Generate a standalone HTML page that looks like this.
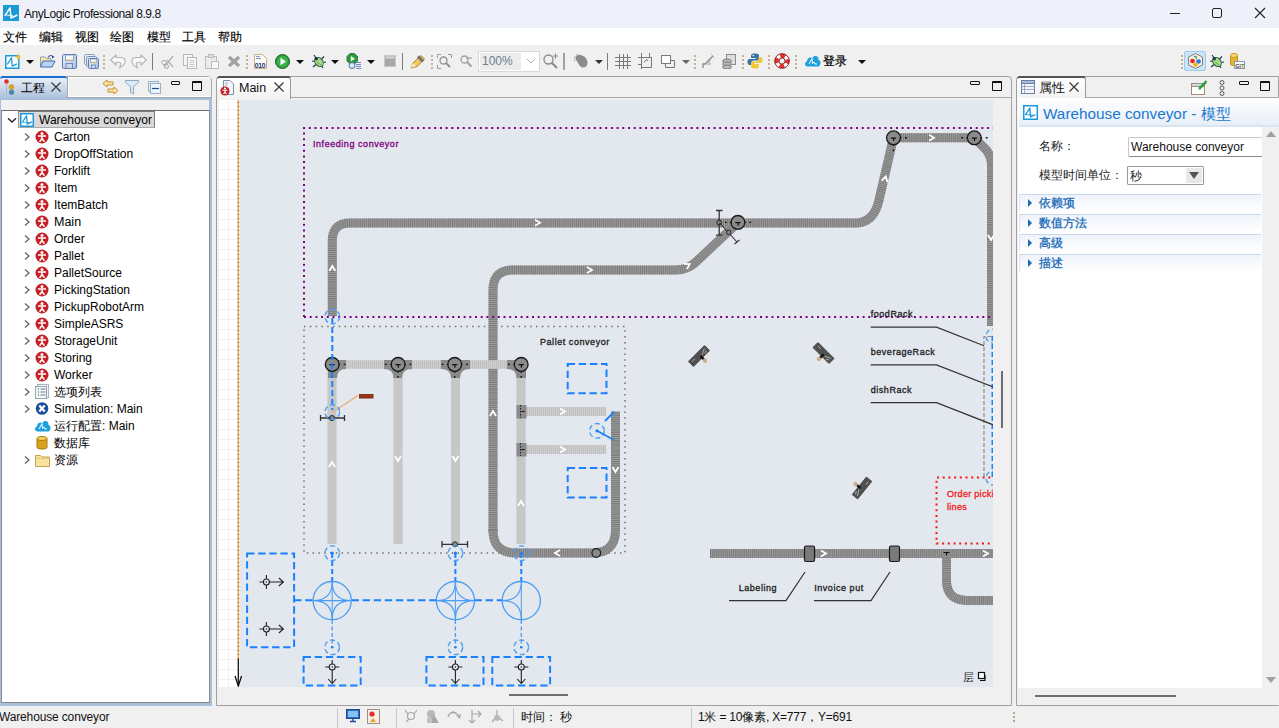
<!DOCTYPE html>
<html><head><meta charset="utf-8">
<style>
*{box-sizing:border-box;margin:0;padding:0}
html,body{width:1279px;height:728px;overflow:hidden;background:#f0f0f0;font-family:"Liberation Sans",sans-serif;font-size:12px;color:#000}
.a{position:absolute}
.t{position:absolute;white-space:nowrap;line-height:14px}
#title{left:0;top:0;width:1279px;height:28px;background:#eef1f9}
#menu{left:0;top:28px;width:1279px;height:17px;background:#fff}
#tb{left:0;top:45px;width:1279px;height:31px;background:#f0f0f0}
.sepd{position:absolute;width:2px;top:55px;height:14px;background:repeating-linear-gradient(#c2b298 0 2px,transparent 2px 4px)}
.sepl{position:absolute;width:1px;top:53px;height:17px;background:#7a7a7a}
.dd{position:absolute;width:0;height:0;border-left:4px solid transparent;border-right:4px solid transparent;border-top:4px solid #111;top:60px}
.tree .r{position:absolute;left:0;height:17px;width:200px}
.tree .r span{position:absolute;left:54px;top:1px;line-height:14px}
.chev{position:absolute;width:6px;height:6px;border-right:1.3px solid #555;border-bottom:1.3px solid #555;transform:rotate(-45deg)}
.agent{position:absolute;left:36px;top:2px;width:13px;height:13px;border-radius:50%;background:#c8222a}
</style></head><body>
<!-- TITLE BAR -->
<div id="title" class="a">
  <svg class="a" style="left:3px;top:5px" width="16" height="16" viewBox="0 0 16 16"><rect width="16" height="16" fill="#1b9ad6"/><path d="M1.8 10.8 L7 2.8 L8 13 L14.5 10" stroke="#fff" stroke-width="1.5" fill="none" stroke-linejoin="round"/><path d="M3 9.8 L10 10.8" stroke="#fff" stroke-width="0.9"/></svg>
  <div class="t" style="left:24px;top:7px;font-size:12px;letter-spacing:-0.45px;color:#111">AnyLogic Professional 8.9.8</div>
  <div class="a" style="left:1169.5px;top:12.5px;width:10px;height:1.4px;background:#222"></div>
  <div class="a" style="left:1211.5px;top:8px;width:10px;height:10px;border:1.2px solid #222;border-radius:2px"></div>
  <svg class="a" style="left:1254px;top:7px" width="12" height="12"><path d="M1 1 L11 11 M11 1 L1 11" stroke="#222" stroke-width="1.1"/></svg>
</div>
<!-- MENU -->
<div id="menu" class="a">
  <div class="t" style="left:3px;top:2px;-webkit-text-stroke:0.15px #000">文件</div>
  <div class="t" style="left:39px;top:2px;-webkit-text-stroke:0.15px #000">编辑</div>
  <div class="t" style="left:75px;top:2px;-webkit-text-stroke:0.15px #000">视图</div>
  <div class="t" style="left:110px;top:2px;-webkit-text-stroke:0.15px #000">绘图</div>
  <div class="t" style="left:147px;top:2px;-webkit-text-stroke:0.15px #000">模型</div>
  <div class="t" style="left:182px;top:2px;-webkit-text-stroke:0.15px #000">工具</div>
  <div class="t" style="left:218px;top:2px;-webkit-text-stroke:0.15px #000">帮助</div>
</div>
<!-- TOOLBAR -->
<div id="tb" class="a"></div>
<svg class="a" style="left:5px;top:53px" width="16" height="16" viewBox="0 0 16 16"><rect x="0.75" y="2.75" width="13" height="12.5" fill="#fff" stroke="#1f9ad8" stroke-width="1.5"/><path d="M2.2 11.5 L6.5 4.8 L7.3 13.2 L12 10.8" stroke="#1f9ad8" stroke-width="1.3" fill="none" stroke-linejoin="round"/><path d="M13 0 L14 3 L16 4 L14 5 L13 8 L12 5 L10 4 L12 3 Z" fill="#f0c030"/></svg>
<div class="dd" style="left:26px"></div>
<svg class="a" style="left:39px;top:54px" width="17" height="14" viewBox="0 0 17 14"><path d="M1.5 3 H6 L7.5 4.5 H12 V12.5 H1.5 Z" fill="#f8e8a8" stroke="#8a90b8" stroke-width="0.9"/><path d="M4 7 H16 L13 13 H1.5 Z" fill="#b8d4f4" stroke="#4a68b0" stroke-width="1"/><path d="M9 3.5 C10.5 1 13 1 14 3" stroke="#4a5a98" fill="none" stroke-width="1.1"/><path d="M13 1.5 L15.5 3 L13 4.5 Z" fill="#2a3a78"/></svg>
<svg class="a" style="left:62px;top:54px" width="15" height="15" viewBox="0 0 15 15"><defs><linearGradient id="sv" x1="0" y1="0" x2="1" y2="1"><stop offset="0" stop-color="#e8f0fa"/><stop offset="1" stop-color="#a8c0e0"/></linearGradient></defs><rect x="0.5" y="0.5" width="14" height="14" rx="1.2" fill="url(#sv)" stroke="#5a78b0"/><rect x="3.5" y="1" width="8" height="5.5" fill="#f4f8fc" stroke="#7a90b8" stroke-width="0.8"/><path d="M3.8 6 H11.2" stroke="#e8c070" stroke-width="1"/><rect x="4" y="9.5" width="6.5" height="5" fill="#c8d8ec" stroke="#5a78b0" stroke-width="0.8"/><path d="M4.5 13.5 H7" stroke="#e8c070"/></svg>
<svg class="a" style="left:84px;top:54px" width="15" height="15" viewBox="0 0 15 15"><rect x="0.5" y="0.5" width="10" height="10" rx="1" fill="#e8f0f8" stroke="#8aa0c0"/><rect x="2.5" y="2.5" width="10" height="10" rx="1" fill="#dae6f4" stroke="#7a90b8"/><rect x="4.5" y="4.5" width="10" height="10" rx="1" fill="url(#sv)" stroke="#5a78b0"/><rect x="6.5" y="5" width="6" height="3.5" fill="#f4f8fc" stroke="#7a90b8" stroke-width="0.7"/><path d="M6.8 8.2 H12.2" stroke="#e8c070"/><rect x="7.5" y="11" width="4" height="3.5" fill="#c8d8ec" stroke="#5a78b0" stroke-width="0.7"/></svg>
<div class="sepd" style="left:103px"></div>
<svg class="a" style="left:110px;top:54px" width="16" height="15" viewBox="0 0 16 15"><path d="M6 0.8 L0.8 6 L6 11.2 V8.3 H9 C10.5 8.3 11 9.5 10.5 11 L9.5 14 C13.5 12 15.5 9 15 6 C14.5 4 13 3.5 11 3.5 H6 Z" fill="#f8f8f8" stroke="#b4b4b4" stroke-width="1.1" stroke-linejoin="round"/></svg>
<svg class="a" style="left:131px;top:54px" width="16" height="15" viewBox="0 0 16 15"><path d="M10 0.8 L15.2 6 L10 11.2 V8.3 H7 C5.5 8.3 5 9.5 5.5 11 L6.5 14 C2.5 12 0.5 9 1 6 C1.5 4 3 3.5 5 3.5 H10 Z" fill="#f8f8f8" stroke="#b4b4b4" stroke-width="1.1" stroke-linejoin="round"/></svg>
<div class="sepl" style="left:152px"></div>
<svg class="a" style="left:161px;top:54px" width="14" height="15" viewBox="0 0 14 15"><path d="M3 13 L12 2 M6 6 L12 13" stroke="#b0b0b0" stroke-width="1.2"/><circle cx="3" cy="8.5" r="2.2" fill="none" stroke="#a8a8a8"/><circle cx="5.5" cy="12.5" r="2" fill="none" stroke="#a8a8a8"/></svg>
<svg class="a" style="left:183px;top:54px" width="14" height="15" viewBox="0 0 14 15"><rect x="0.5" y="0.5" width="9" height="11" fill="#f4f4f4" stroke="#b8b8b8"/><rect x="4.5" y="3.5" width="9" height="11" fill="#f8f8f8" stroke="#b8b8b8"/><path d="M6.5 6.5h5M6.5 8.5h5M6.5 10.5h5M6.5 12.5h5" stroke="#c8c8c8"/></svg>
<svg class="a" style="left:205px;top:54px" width="14" height="15" viewBox="0 0 14 15"><rect x="0.5" y="2.5" width="11" height="12" fill="#ececec" stroke="#bcbcbc"/><rect x="3.5" y="0.5" width="5" height="3" fill="#ddd" stroke="#bcbcbc"/><rect x="6.5" y="7.5" width="7" height="7" fill="#f8f8f8" stroke="#bcbcbc"/></svg>
<svg class="a" style="left:227px;top:55px" width="14" height="13" viewBox="0 0 14 13"><path d="M2 2 L12 11 M12 2 L2 11" stroke="#a0a0a0" stroke-width="3.2"/></svg>
<div class="sepd" style="left:246px"></div>
<svg class="a" style="left:254px;top:54px" width="13" height="15" viewBox="0 0 13 15"><path d="M0.5 0.5 H8.5 L12.5 4.5 V14.5 H0.5 Z" fill="#fafaf6" stroke="#c8b080"/><path d="M2 2.5h4M2 4.5h5" stroke="#6080b0" stroke-width="0.8"/><rect x="1" y="7.5" width="11" height="6" fill="#fff"/><text x="0.8" y="13.6" font-family="Liberation Sans" font-size="6.8" font-weight="bold" fill="#1a3070" letter-spacing="-0.3">010</text></svg>
<svg class="a" style="left:275px;top:54px" width="15" height="15" viewBox="0 0 15 15"><circle cx="7.5" cy="7.5" r="7" fill="#2a9a3a" stroke="#1a6a20" stroke-width="1"/><circle cx="7.5" cy="7.5" r="5.5" fill="#3cb04a"/><path d="M5.5 3.8 L11 7.5 L5.5 11.2 Z" fill="#fff"/></svg>
<div class="dd" style="left:296px"></div>
<svg class="a" style="left:311px;top:53px" width="16" height="16" viewBox="0 0 16 16"><path d="M3 2 L5.5 5.5 M1 8 L4 8.5 M2 14 L5 11.5 M13 3.5 L10.5 6 M15 9 L12 9.5 M12 15 L10 12" stroke="#1a4040" stroke-width="1.2"/><ellipse cx="8" cy="9" rx="3.8" ry="5" transform="rotate(-40 8 9)" fill="#a8d888" stroke="#2a6050" stroke-width="1"/><circle cx="5.2" cy="5.8" r="1.8" fill="#1a4040"/><path d="M6 9 L10 12" stroke="#5a9860" stroke-width="0.8"/></svg>
<div class="dd" style="left:331px"></div>
<svg class="a" style="left:346px;top:53px" width="16" height="16" viewBox="0 0 16 16"><path d="M4 0.5 H8.5 L11.5 3.5 V8 L8.5 11 H4 L1 8 V3.5 Z" fill="#2a9a3a" stroke="#1a6a20" stroke-width="0.8"/><path d="M4.8 3 L9 5.8 L4.8 8.6 Z" fill="#fff"/><circle cx="6" cy="12.5" r="3" fill="#d8e8f8" stroke="#4a70b0"/><path d="M10 9.5h5M10 11.5h5M10 13.5h5M10 15.5h5" stroke="#5a80c0" stroke-width="0.9"/></svg>
<div class="dd" style="left:367px"></div>
<svg class="a" style="left:384px;top:55px" width="12" height="12" viewBox="0 0 12 12"><rect x="0.5" y="0.5" width="11" height="11" fill="#a8a8a8" stroke="#c8c8c8"/><rect x="1.5" y="1.5" width="9" height="2" fill="#d8d8d8"/></svg>
<div class="sepl" style="left:402px"></div>
<svg class="a" style="left:410px;top:54px" width="16" height="15" viewBox="0 0 16 15"><path d="M1 14 L3 9 L11 1.5 L14.5 5 L7 12.5 Z" fill="#f0c860" stroke="#b08020"/><path d="M8 2.5 L13 7.5" stroke="#707070" stroke-width="3"/><path d="M1 14 L3 9 L6 12 Z" fill="#fff4c0"/></svg>
<div class="sepd" style="left:431px"></div>
<svg class="a" style="left:437px;top:54px" width="15" height="15" viewBox="0 0 15 15"><path d="M0.5 4 V0.5 H4 M11 0.5 H14.5 V4 M0.5 11 V14.5 H4" stroke="#9a9a9a" fill="none"/><circle cx="6.5" cy="6.5" r="3.5" fill="none" stroke="#909090" stroke-width="1.3"/><path d="M9 9 L13 13" stroke="#909090" stroke-width="2"/></svg>
<svg class="a" style="left:460px;top:55px" width="13" height="13" viewBox="0 0 13 13"><circle cx="4.5" cy="4.5" r="3.5" fill="none" stroke="#a0a0a0" stroke-width="1.3"/><path d="M7 7 L11.5 11.5" stroke="#a0a0a0" stroke-width="2"/><path d="M6 3h6" stroke="#a0a0a0" stroke-width="1.2"/></svg>
<div class="a" style="left:478px;top:51px;width:62px;height:21px;background:#fff;border:1px solid #d8d8d8"></div><div class="a" style="left:480px;top:53px;width:41px;height:17px;background:#ececec"></div><div class="t" style="left:482px;top:54px;font-size:12px;color:#6e7e90">100%</div><svg class="a" style="left:526px;top:58px" width="10" height="6"><path d="M1 1 L5 5 L9 1" stroke="#aaa" fill="none"/></svg>
<svg class="a" style="left:543px;top:53px" width="16" height="16" viewBox="0 0 16 16"><circle cx="5.5" cy="6.5" r="4.5" fill="none" stroke="#8c8c8c" stroke-width="1.3"/><path d="M8.5 9.5 L14 15" stroke="#8c8c8c" stroke-width="2.2"/><path d="M10 3h5M12.5 0.5v5" stroke="#8c8c8c" stroke-width="1.2"/></svg>
<div class="sepl" style="left:563px;width:2px;background:#a0a0a0"></div>
<svg class="a" style="left:573px;top:53px" width="16" height="16" viewBox="0 0 16 16"><path d="M2.5 5 C3 2 6 1 9 2.5 C12 3.5 14.5 6 14.5 10 C14.5 13 12 15 9.5 14.5 C7 14 5.5 11 4.5 9 C3.5 7.5 2.3 6.5 2.5 5 Z" fill="#8c8c8c"/><path d="M1.5 8 C0.8 5 2 2 5 1" stroke="#8c8c8c" stroke-width="1" stroke-dasharray="1 1.2" fill="none"/></svg>
<div class="dd" style="left:595px;border-top-color:#333"></div>
<div class="sepl" style="left:607px"></div>
<svg class="a" style="left:615px;top:54px" width="16" height="15" viewBox="0 0 16 15"><path d="M4.5 0 V15 M8.5 0 V15 M12.5 0 V15 M0 3.5 H16 M0 7.5 H16 M0 11.5 H16" stroke="#7a7a7a" stroke-width="1"/></svg>
<svg class="a" style="left:638px;top:53px" width="15" height="16" viewBox="0 0 15 16"><path d="M3.5 0 V16 M0 4.5 H6 M11.5 0 V5 M0 11.5 H4" stroke="#7a7a7a"/><rect x="3.5" y="4.5" width="10" height="10" fill="none" stroke="#7a7a7a"/><path d="M6 9 L9 6.5 L10 8" stroke="#7a7a7a" fill="none"/></svg>
<svg class="a" style="left:661px;top:55px" width="14" height="13" viewBox="0 0 14 13"><rect x="0.5" y="0.5" width="9" height="8" fill="#fff" stroke="#7a7a7a"/><path d="M9.5 5.5 H13.5 V12.5 H4.5 V8.5" fill="none" stroke="#7a7a7a"/></svg>
<div class="dd" style="left:682px;border-top-color:#666"></div>
<div class="sepd" style="left:694px"></div>
<svg class="a" style="left:700px;top:53px" width="15" height="16" viewBox="0 0 15 16"><path d="M3 15 V11 H6" stroke="#8a8a8a" fill="none" stroke-width="1.3"/><path d="M5 11 L13 3" stroke="#8a8a8a" stroke-width="1.3"/><path d="M7 9h3M7 11h4M8 7h3" stroke="#9a9a9a"/><path d="M11 1 L15 5" stroke="#9a9a9a" stroke-dasharray="1 1"/></svg>
<svg class="a" style="left:722px;top:54px" width="14" height="15" viewBox="0 0 14 15"><rect x="4.5" y="0.5" width="9" height="10" fill="#ddd" stroke="#8a8a8a"/><ellipse cx="5" cy="7" rx="4.5" ry="2" fill="#bcbcbc" stroke="#7a7a7a"/><ellipse cx="5" cy="10" rx="4.5" ry="2" fill="#bcbcbc" stroke="#7a7a7a"/><ellipse cx="5" cy="13" rx="4.5" ry="2" fill="#bcbcbc" stroke="#7a7a7a"/></svg>
<div class="sepd" style="left:742px"></div>
<svg class="a" style="left:747px;top:53px" width="16" height="16" viewBox="0 0 16 16"><path d="M8 0.5 C4 0.5 4 2 4 3.5 V5 H8.5 V6 H2.5 C0.5 6 0.5 8 0.5 9 C0.5 11 1 12 3 12 H4.5 V10 C4.5 8.5 5.5 7.5 7 7.5 H10.5 C11.5 7.5 12 7 12 6 V2.5 C12 1 10.5 0.5 8 0.5 Z" fill="#3a72a8"/><path d="M8 15.5 C12 15.5 12 14 12 12.5 V11 H7.5 V10 H13.5 C15.5 10 15.5 8 15.5 7 C15.5 5 15 4 13 4 H11.5 V6 C11.5 7.5 10.5 8.5 9 8.5 H5.5 C4.5 8.5 4 9 4 10 V13.5 C4 15 5.5 15.5 8 15.5 Z" fill="#f0c838"/><circle cx="6.3" cy="2.6" r="0.8" fill="#fff"/></svg>
<div class="sepd" style="left:768px"></div>
<svg class="a" style="left:774px;top:53px" width="16" height="16" viewBox="0 0 16 16"><circle cx="8" cy="8" r="5.2" fill="none" stroke="#fff" stroke-width="4.2"/><circle cx="8" cy="8" r="5.2" fill="none" stroke="#e8302a" stroke-width="4.2" stroke-dasharray="4.90 3.27" stroke-dashoffset="2.45"/><circle cx="8" cy="8" r="7.3" fill="none" stroke="#7a1a1a" stroke-width="0.9"/><circle cx="8" cy="8" r="3.1" fill="#f0f0f0" stroke="#7a1a1a" stroke-width="0.9"/></svg>
<div class="sepd" style="left:795px"></div>
<svg class="a" style="left:804px;top:55px" width="17" height="12" viewBox="0 0 17 12"><path d="M3.5 11.5 C0.5 11.5 0.2 7 3 6.5 C3 3 6 1.5 8.5 3 C10 0 15 0.5 14.5 5 C17.5 5.5 17 11.5 14 11.5 Z" fill="#1e9fe0"/><path d="M5 9 L8 3.5 L8.5 8.5 L10 7 L11 9 L13 9" stroke="#fff" stroke-width="1" fill="none"/></svg>
<div class="t" style="left:823px;top:54px;font-size:12px;font-weight:normal;-webkit-text-stroke:0.2px #000">登录</div>
<div class="dd" style="left:858px"></div>
<div class="sepd" style="left:1181px;top:55px;width:2px"></div>
<div class="a" style="left:1184px;top:51px;width:22px;height:20px;background:#cce4f8;border:1px solid #99ccf4;border-radius:2px"></div>
<svg class="a" style="left:1188px;top:53px" width="15" height="16" viewBox="0 0 15 16"><path d="M7.5 0.5 L14.5 4 V12 L7.5 15.5 L0.5 12 V4 Z" fill="#f0ece4" stroke="#8a8278"/><circle cx="4.5" cy="8" r="2.3" fill="#e02828"/><circle cx="10.5" cy="8.5" r="2.3" fill="#2a78d8"/><circle cx="7.5" cy="11.5" r="2.3" fill="#f0b818"/><path d="M6 3.5 C8 3 9 4 8 6" stroke="#30a040" stroke-width="1.2" fill="none"/></svg>
<svg class="a" style="left:1209px;top:53px" width="16" height="16" viewBox="0 0 16 16"><path d="M3 2 L5.5 5.5 M1 8 L4 8.5 M2 14 L5 11.5 M13 3.5 L10.5 6 M15 9 L12 9.5 M12 15 L10 12" stroke="#1a4040" stroke-width="1.2"/><ellipse cx="8" cy="9" rx="3.8" ry="5" transform="rotate(-40 8 9)" fill="#a8d888" stroke="#2a6050" stroke-width="1"/><circle cx="5.2" cy="5.8" r="1.8" fill="#1a4040"/><path d="M6 9 L10 12" stroke="#5a9860" stroke-width="0.8"/></svg>
<svg class="a" style="left:1230px;top:53px" width="15" height="16" viewBox="0 0 15 16"><path d="M0.5 2.5 V11 C0.5 13 7.5 13 7.5 11 V2.5" fill="#e8b830" stroke="#c09020"/><ellipse cx="4" cy="2.5" rx="3.5" ry="2" fill="#f8e070" stroke="#c09020"/><rect x="4.5" y="8.5" width="10" height="7" fill="#f8f8f8" stroke="#8a9ab0"/><text x="5.3" y="14.5" font-family="Liberation Sans" font-size="5.5" font-weight="bold" fill="#444">G<tspan fill="#d03030">I</tspan><tspan fill="#30a040">T</tspan></text></svg>

<!-- LEFT PANEL -->
<div class="a" style="left:0;top:76px;width:212px;height:630px;background:#f0f0f0;border:1px solid #a8a8a8;border-radius:4px 4px 0 0"></div>

<div class="a" style="left:0;top:76px;width:67px;height:23px;background:linear-gradient(#e8eef7,#a9bfdc);border-top:2px solid #1a6fd0;border-radius:3px 3px 0 0"></div>
<div class="a" style="left:67px;top:77px;width:144px;height:21px;border-left:1px solid #a8a8a8;border-bottom:1px solid #a8a8a8;box-shadow:inset 1px 1px 0 #fff, inset 0 -1px 0 #fff"></div>
<svg class="a" style="left:4px;top:79px" width="11" height="16" viewBox="0 0 11 16"><path d="M2.5 5 V15" stroke="#999" stroke-width="1" stroke-dasharray="1 1"/><circle cx="2.5" cy="2.5" r="2.3" fill="#e53030"/><circle cx="7.5" cy="8" r="2.8" fill="#d8a030"/><circle cx="7.5" cy="13.2" r="2.6" fill="#4a8aa8"/></svg>
<div class="t" style="left:21px;top:81px;font-size:12px">工程</div>
<svg class="a" style="left:51px;top:82px" width="10" height="10"><path d="M0.5 0.5 L9.5 9.5 M9.5 0.5 L0.5 9.5" stroke="#333" stroke-width="1.1"/></svg>
<svg class="a" style="left:102px;top:79px" width="17" height="16" viewBox="0 0 17 16"><path d="M1 4.5 L5 1 V3 H11 V6 H5 V8 Z" fill="#fbe7a8" stroke="#c89028" stroke-width="1"/><path d="M16 11.5 L12 8 V10 H6 V13 H12 V15 Z" fill="#fbe7a8" stroke="#c89028" stroke-width="1"/></svg>
<svg class="a" style="left:125px;top:80px" width="14" height="15" viewBox="0 0 14 15"><path d="M0.5 0.5 H13.5 V2 L8.5 7 V14 L5.5 12.5 V7 L0.5 2 Z" fill="#d6eaf8" stroke="#8aa8c4"/></svg>
<svg class="a" style="left:148px;top:81px" width="13" height="13" viewBox="0 0 13 13"><rect x="0.5" y="0.5" width="10" height="10" fill="#dcecf8" stroke="#98b0c8"/><rect x="2.5" y="2.5" width="10" height="10" fill="#eaf4fc" stroke="#98b0c8"/><path d="M4 7.5 H11" stroke="#1a5090" stroke-width="1.2"/></svg>
<div class="a" style="left:171px;top:81px;width:9px;height:4px;border:1px solid #111;border-radius:1px"></div>
<div class="a" style="left:192px;top:81px;width:10px;height:10px;border:1px solid #111;border-top-width:2px;border-radius:1px"></div>
<div class="a" style="left:0;top:98px;width:212px;height:608px;background:#a9c0dc"></div>
<div class="a" style="left:1px;top:100px;width:208px;height:603px;background:#f0f0f0"></div>
<div class="a tree" style="left:1px;top:110px;width:209px;height:593px;background:#fff;border-top:1px solid #6e6e6e;border-left:1px solid #8a8a8a;border-right:1px solid #8a8a8a;border-bottom:1px solid #8a8a8a"></div>
<svg class="a" style="left:7px;top:117px" width="10" height="7"><path d="M1 1.2 L5 5 L9 1.2" stroke="#222" stroke-width="1.3" fill="none"/></svg>
<div class="a" style="left:18px;top:111px;width:137px;height:17px;background:#d9d9d9;border:1px solid #7a7a7a;border-left-color:#999;border-bottom-color:#aaa"></div>
<svg class="a" style="left:20px;top:113px" width="14" height="14" viewBox="0 0 14 14"><rect x="0.75" y="0.75" width="12.5" height="12.5" fill="#fff" stroke="#1f9ad8" stroke-width="1.5"/><path d="M2.2 9.5 L6.5 2.8 L7.3 11.2 L12 8.8" stroke="#1f9ad8" stroke-width="1.3" fill="none" stroke-linejoin="round"/><path d="M2.8 9 L9.5 9.8" stroke="#1f9ad8" stroke-width="0.8"/></svg>
<div class="t" style="left:39px;top:113px">Warehouse conveyor</div>
<svg class="a" style="left:23px;top:132px" width="8" height="10"><path d="M2 1.5 L6 5 L2 8.5" stroke="#666" stroke-width="1.3" fill="none"/></svg><svg class="a" style="left:35px;top:130px" width="14" height="14" viewBox="0 0 14 14"><circle cx="7" cy="7" r="6.5" fill="#c42228"/><circle cx="7" cy="3.6" r="1.5" fill="#fff"/><path d="M3 6 H11 M7 5.5 V8.8 M4.6 11.8 L7 8.5 L9.4 11.8" stroke="#fff" stroke-width="1.5" fill="none"/></svg><div class="t" style="left:54px;top:130px">Carton</div>
<svg class="a" style="left:23px;top:149px" width="8" height="10"><path d="M2 1.5 L6 5 L2 8.5" stroke="#666" stroke-width="1.3" fill="none"/></svg><svg class="a" style="left:35px;top:147px" width="14" height="14" viewBox="0 0 14 14"><circle cx="7" cy="7" r="6.5" fill="#c42228"/><circle cx="7" cy="3.6" r="1.5" fill="#fff"/><path d="M3 6 H11 M7 5.5 V8.8 M4.6 11.8 L7 8.5 L9.4 11.8" stroke="#fff" stroke-width="1.5" fill="none"/></svg><div class="t" style="left:54px;top:147px">DropOffStation</div>
<svg class="a" style="left:23px;top:166px" width="8" height="10"><path d="M2 1.5 L6 5 L2 8.5" stroke="#666" stroke-width="1.3" fill="none"/></svg><svg class="a" style="left:35px;top:164px" width="14" height="14" viewBox="0 0 14 14"><circle cx="7" cy="7" r="6.5" fill="#c42228"/><circle cx="7" cy="3.6" r="1.5" fill="#fff"/><path d="M3 6 H11 M7 5.5 V8.8 M4.6 11.8 L7 8.5 L9.4 11.8" stroke="#fff" stroke-width="1.5" fill="none"/></svg><div class="t" style="left:54px;top:164px">Forklift</div>
<svg class="a" style="left:23px;top:183px" width="8" height="10"><path d="M2 1.5 L6 5 L2 8.5" stroke="#666" stroke-width="1.3" fill="none"/></svg><svg class="a" style="left:35px;top:181px" width="14" height="14" viewBox="0 0 14 14"><circle cx="7" cy="7" r="6.5" fill="#c42228"/><circle cx="7" cy="3.6" r="1.5" fill="#fff"/><path d="M3 6 H11 M7 5.5 V8.8 M4.6 11.8 L7 8.5 L9.4 11.8" stroke="#fff" stroke-width="1.5" fill="none"/></svg><div class="t" style="left:54px;top:181px">Item</div>
<svg class="a" style="left:23px;top:200px" width="8" height="10"><path d="M2 1.5 L6 5 L2 8.5" stroke="#666" stroke-width="1.3" fill="none"/></svg><svg class="a" style="left:35px;top:198px" width="14" height="14" viewBox="0 0 14 14"><circle cx="7" cy="7" r="6.5" fill="#c42228"/><circle cx="7" cy="3.6" r="1.5" fill="#fff"/><path d="M3 6 H11 M7 5.5 V8.8 M4.6 11.8 L7 8.5 L9.4 11.8" stroke="#fff" stroke-width="1.5" fill="none"/></svg><div class="t" style="left:54px;top:198px">ItemBatch</div>
<svg class="a" style="left:23px;top:217px" width="8" height="10"><path d="M2 1.5 L6 5 L2 8.5" stroke="#666" stroke-width="1.3" fill="none"/></svg><svg class="a" style="left:35px;top:215px" width="14" height="14" viewBox="0 0 14 14"><circle cx="7" cy="7" r="6.5" fill="#c42228"/><circle cx="7" cy="3.6" r="1.5" fill="#fff"/><path d="M3 6 H11 M7 5.5 V8.8 M4.6 11.8 L7 8.5 L9.4 11.8" stroke="#fff" stroke-width="1.5" fill="none"/></svg><div class="t" style="left:54px;top:214.5px;font-size:12.5px">Main</div>
<svg class="a" style="left:23px;top:234px" width="8" height="10"><path d="M2 1.5 L6 5 L2 8.5" stroke="#666" stroke-width="1.3" fill="none"/></svg><svg class="a" style="left:35px;top:232px" width="14" height="14" viewBox="0 0 14 14"><circle cx="7" cy="7" r="6.5" fill="#c42228"/><circle cx="7" cy="3.6" r="1.5" fill="#fff"/><path d="M3 6 H11 M7 5.5 V8.8 M4.6 11.8 L7 8.5 L9.4 11.8" stroke="#fff" stroke-width="1.5" fill="none"/></svg><div class="t" style="left:54px;top:232px">Order</div>
<svg class="a" style="left:23px;top:251px" width="8" height="10"><path d="M2 1.5 L6 5 L2 8.5" stroke="#666" stroke-width="1.3" fill="none"/></svg><svg class="a" style="left:35px;top:249px" width="14" height="14" viewBox="0 0 14 14"><circle cx="7" cy="7" r="6.5" fill="#c42228"/><circle cx="7" cy="3.6" r="1.5" fill="#fff"/><path d="M3 6 H11 M7 5.5 V8.8 M4.6 11.8 L7 8.5 L9.4 11.8" stroke="#fff" stroke-width="1.5" fill="none"/></svg><div class="t" style="left:54px;top:249px">Pallet</div>
<svg class="a" style="left:23px;top:268px" width="8" height="10"><path d="M2 1.5 L6 5 L2 8.5" stroke="#666" stroke-width="1.3" fill="none"/></svg><svg class="a" style="left:35px;top:266px" width="14" height="14" viewBox="0 0 14 14"><circle cx="7" cy="7" r="6.5" fill="#c42228"/><circle cx="7" cy="3.6" r="1.5" fill="#fff"/><path d="M3 6 H11 M7 5.5 V8.8 M4.6 11.8 L7 8.5 L9.4 11.8" stroke="#fff" stroke-width="1.5" fill="none"/></svg><div class="t" style="left:54px;top:266px">PalletSource</div>
<svg class="a" style="left:23px;top:285px" width="8" height="10"><path d="M2 1.5 L6 5 L2 8.5" stroke="#666" stroke-width="1.3" fill="none"/></svg><svg class="a" style="left:35px;top:283px" width="14" height="14" viewBox="0 0 14 14"><circle cx="7" cy="7" r="6.5" fill="#c42228"/><circle cx="7" cy="3.6" r="1.5" fill="#fff"/><path d="M3 6 H11 M7 5.5 V8.8 M4.6 11.8 L7 8.5 L9.4 11.8" stroke="#fff" stroke-width="1.5" fill="none"/></svg><div class="t" style="left:54px;top:283px">PickingStation</div>
<svg class="a" style="left:23px;top:302px" width="8" height="10"><path d="M2 1.5 L6 5 L2 8.5" stroke="#666" stroke-width="1.3" fill="none"/></svg><svg class="a" style="left:35px;top:300px" width="14" height="14" viewBox="0 0 14 14"><circle cx="7" cy="7" r="6.5" fill="#c42228"/><circle cx="7" cy="3.6" r="1.5" fill="#fff"/><path d="M3 6 H11 M7 5.5 V8.8 M4.6 11.8 L7 8.5 L9.4 11.8" stroke="#fff" stroke-width="1.5" fill="none"/></svg><div class="t" style="left:54px;top:300px">PickupRobotArm</div>
<svg class="a" style="left:23px;top:319px" width="8" height="10"><path d="M2 1.5 L6 5 L2 8.5" stroke="#666" stroke-width="1.3" fill="none"/></svg><svg class="a" style="left:35px;top:317px" width="14" height="14" viewBox="0 0 14 14"><circle cx="7" cy="7" r="6.5" fill="#c42228"/><circle cx="7" cy="3.6" r="1.5" fill="#fff"/><path d="M3 6 H11 M7 5.5 V8.8 M4.6 11.8 L7 8.5 L9.4 11.8" stroke="#fff" stroke-width="1.5" fill="none"/></svg><div class="t" style="left:54px;top:317px">SimpleASRS</div>
<svg class="a" style="left:23px;top:336px" width="8" height="10"><path d="M2 1.5 L6 5 L2 8.5" stroke="#666" stroke-width="1.3" fill="none"/></svg><svg class="a" style="left:35px;top:334px" width="14" height="14" viewBox="0 0 14 14"><circle cx="7" cy="7" r="6.5" fill="#c42228"/><circle cx="7" cy="3.6" r="1.5" fill="#fff"/><path d="M3 6 H11 M7 5.5 V8.8 M4.6 11.8 L7 8.5 L9.4 11.8" stroke="#fff" stroke-width="1.5" fill="none"/></svg><div class="t" style="left:54px;top:334px">StorageUnit</div>
<svg class="a" style="left:23px;top:353px" width="8" height="10"><path d="M2 1.5 L6 5 L2 8.5" stroke="#666" stroke-width="1.3" fill="none"/></svg><svg class="a" style="left:35px;top:351px" width="14" height="14" viewBox="0 0 14 14"><circle cx="7" cy="7" r="6.5" fill="#c42228"/><circle cx="7" cy="3.6" r="1.5" fill="#fff"/><path d="M3 6 H11 M7 5.5 V8.8 M4.6 11.8 L7 8.5 L9.4 11.8" stroke="#fff" stroke-width="1.5" fill="none"/></svg><div class="t" style="left:54px;top:351px">Storing</div>
<svg class="a" style="left:23px;top:370px" width="8" height="10"><path d="M2 1.5 L6 5 L2 8.5" stroke="#666" stroke-width="1.3" fill="none"/></svg><svg class="a" style="left:35px;top:368px" width="14" height="14" viewBox="0 0 14 14"><circle cx="7" cy="7" r="6.5" fill="#c42228"/><circle cx="7" cy="3.6" r="1.5" fill="#fff"/><path d="M3 6 H11 M7 5.5 V8.8 M4.6 11.8 L7 8.5 L9.4 11.8" stroke="#fff" stroke-width="1.5" fill="none"/></svg><div class="t" style="left:54px;top:368px">Worker</div>
<svg class="a" style="left:23px;top:387px" width="8" height="10"><path d="M2 1.5 L6 5 L2 8.5" stroke="#666" stroke-width="1.3" fill="none"/></svg><svg class="a" style="left:35px;top:384px" width="14" height="15" viewBox="0 0 14 15"><rect x="2.5" y="0.5" width="11" height="13" fill="#eef2f6" stroke="#a8b4c0"/><rect x="0.5" y="2.5" width="11" height="12" fill="#f4f6f8" stroke="#98a4b0"/><path d="M3 5h1M3 8h1M3 11h1" stroke="#2da04a" stroke-width="1.6"/><path d="M5.5 5h5M5.5 8h5M5.5 11h5" stroke="#6a7c90" stroke-width="1"/></svg><div class="t" style="left:54px;top:385px">选项列表</div>
<svg class="a" style="left:23px;top:404px" width="8" height="10"><path d="M2 1.5 L6 5 L2 8.5" stroke="#666" stroke-width="1.3" fill="none"/></svg><svg class="a" style="left:35px;top:402px" width="14" height="14" viewBox="0 0 14 14"><circle cx="7" cy="6.5" r="6.3" fill="#1a4f9c"/><path d="M4.3 3.5 L9.7 9.5 M9.7 3.5 L4.3 9.5" stroke="#fff" stroke-width="2.2"/></svg><div class="t" style="left:54px;top:402px">Simulation: Main</div>
<svg class="a" style="left:34px;top:420px" width="17" height="12" viewBox="0 0 17 12"><path d="M3.5 11.5 C0.5 11.5 0.2 7 3 6.5 C3 3 6 1.5 8.5 3 C10 0 15 0.5 14.5 5 C17.5 5.5 17 11.5 14 11.5 Z" fill="#1e9fe0"/><path d="M5 9 L8 3.5 L8.5 8.5 L10 7 L11 9 L13 9" stroke="#fff" stroke-width="1" fill="none"/></svg><div class="t" style="left:54px;top:419px">运行配置: Main</div>
<svg class="a" style="left:36px;top:436px" width="12" height="14" viewBox="0 0 12 14"><path d="M1 2.5 V11.5 C1 13.5 11 13.5 11 11.5 V2.5" fill="#d9a21a" stroke="#a97a10"/><ellipse cx="6" cy="2.5" rx="5" ry="2" fill="#f4d060" stroke="#a97a10"/></svg><div class="t" style="left:54px;top:436px">数据库</div>
<svg class="a" style="left:23px;top:455px" width="8" height="10"><path d="M2 1.5 L6 5 L2 8.5" stroke="#666" stroke-width="1.3" fill="none"/></svg><svg class="a" style="left:35px;top:454px" width="15" height="13" viewBox="0 0 15 13"><path d="M0.5 1.5 H5.5 L7 3 H14.5 V12.5 H0.5 Z" fill="#f8e2a0" stroke="#c8a050"/><path d="M0.5 4.5 H14.5" stroke="#e8c878"/></svg><div class="t" style="left:54px;top:453px">资源</div>


<!-- EDITOR PANEL -->
<div class="a" style="left:216px;top:76px;width:796px;height:630px;background:#f0f0f0;border:1px solid #a0a0a0;border-radius:4px 4px 0 0"></div>
<div class="a" style="left:217px;top:76px;width:74px;height:23px;background:linear-gradient(#fff,#f2f2f2);border-top:2px solid #555;border-right:1px solid #9a9a9a;border-radius:3px 3px 0 0"></div>
<div class="a" style="left:291px;top:97px;width:720px;height:1px;background:#a8a8a8"></div>
<svg class="a" style="left:220px;top:80px" width="14" height="16" viewBox="0 0 14 16"><path d="M3.5 0.5 H10 L13.5 4 V14.5 H3.5 Z" fill="#f4f6fa" stroke="#7890b0"/><path d="M5 3h3M5 5h2" stroke="#7890b0" stroke-width="0.7"/><circle cx="5" cy="11" r="4.6" fill="#c42228"/><circle cx="5" cy="8.6" r="1" fill="#fff"/><path d="M2.6 10.2 H7.4 M5 9.8 V12 M3.6 14 L5 11.8 L6.4 14" stroke="#fff" stroke-width="1.1" fill="none"/></svg>
<div class="t" style="left:239px;top:81px;font-size:12.5px;color:#111">Main</div>
<svg class="a" style="left:274px;top:82px" width="10" height="10"><path d="M0.5 0.5 L9.5 9.5 M9.5 0.5 L0.5 9.5" stroke="#333" stroke-width="1.1"/></svg>
<div class="a" style="left:970px;top:81px;width:10px;height:4px;border:1px solid #111;border-radius:1px"></div>
<div class="a" style="left:992px;top:81px;width:10px;height:10px;border:1px solid #111;border-top-width:2px;border-radius:1px"></div>
<div class="a" style="left:509px;top:694px;width:59px;height:2px;background:#6e6e6e"></div>
<div class="a" style="left:1001px;top:371px;width:2px;height:57px;background:#6e6e6e"></div>
<svg class="a" style="left:219px;top:100px" width="774" height="587" viewBox="219 100 774 587"><rect x="219" y="100" width="774" height="587" fill="#fff"/><line x1="228.5" y1="100" x2="228.5" y2="687" stroke="#f0f0f0"/><line x1="238.5" y1="100" x2="238.5" y2="687" stroke="#f0f0f0"/><line x1="219" y1="109.5" x2="239" y2="109.5" stroke="#f0f0f0"/><line x1="219" y1="119.5" x2="239" y2="119.5" stroke="#f0f0f0"/><line x1="219" y1="129.5" x2="239" y2="129.5" stroke="#f0f0f0"/><line x1="219" y1="139.5" x2="239" y2="139.5" stroke="#f0f0f0"/><line x1="219" y1="149.5" x2="239" y2="149.5" stroke="#f0f0f0"/><line x1="219" y1="159.5" x2="239" y2="159.5" stroke="#f0f0f0"/><line x1="219" y1="169.5" x2="239" y2="169.5" stroke="#f0f0f0"/><line x1="219" y1="179.5" x2="239" y2="179.5" stroke="#f0f0f0"/><line x1="219" y1="189.5" x2="239" y2="189.5" stroke="#f0f0f0"/><line x1="219" y1="199.5" x2="239" y2="199.5" stroke="#f0f0f0"/><line x1="219" y1="209.5" x2="239" y2="209.5" stroke="#f0f0f0"/><line x1="219" y1="219.5" x2="239" y2="219.5" stroke="#f0f0f0"/><line x1="219" y1="229.5" x2="239" y2="229.5" stroke="#f0f0f0"/><line x1="219" y1="239.5" x2="239" y2="239.5" stroke="#f0f0f0"/><line x1="219" y1="249.5" x2="239" y2="249.5" stroke="#f0f0f0"/><line x1="219" y1="259.5" x2="239" y2="259.5" stroke="#f0f0f0"/><line x1="219" y1="269.5" x2="239" y2="269.5" stroke="#f0f0f0"/><line x1="219" y1="279.5" x2="239" y2="279.5" stroke="#f0f0f0"/><line x1="219" y1="289.5" x2="239" y2="289.5" stroke="#f0f0f0"/><line x1="219" y1="299.5" x2="239" y2="299.5" stroke="#f0f0f0"/><line x1="219" y1="309.5" x2="239" y2="309.5" stroke="#f0f0f0"/><line x1="219" y1="319.5" x2="239" y2="319.5" stroke="#f0f0f0"/><line x1="219" y1="329.5" x2="239" y2="329.5" stroke="#f0f0f0"/><line x1="219" y1="339.5" x2="239" y2="339.5" stroke="#f0f0f0"/><line x1="219" y1="349.5" x2="239" y2="349.5" stroke="#f0f0f0"/><line x1="219" y1="359.5" x2="239" y2="359.5" stroke="#f0f0f0"/><line x1="219" y1="369.5" x2="239" y2="369.5" stroke="#f0f0f0"/><line x1="219" y1="379.5" x2="239" y2="379.5" stroke="#f0f0f0"/><line x1="219" y1="389.5" x2="239" y2="389.5" stroke="#f0f0f0"/><line x1="219" y1="399.5" x2="239" y2="399.5" stroke="#f0f0f0"/><line x1="219" y1="409.5" x2="239" y2="409.5" stroke="#f0f0f0"/><line x1="219" y1="419.5" x2="239" y2="419.5" stroke="#f0f0f0"/><line x1="219" y1="429.5" x2="239" y2="429.5" stroke="#f0f0f0"/><line x1="219" y1="439.5" x2="239" y2="439.5" stroke="#f0f0f0"/><line x1="219" y1="449.5" x2="239" y2="449.5" stroke="#f0f0f0"/><line x1="219" y1="459.5" x2="239" y2="459.5" stroke="#f0f0f0"/><line x1="219" y1="469.5" x2="239" y2="469.5" stroke="#f0f0f0"/><line x1="219" y1="479.5" x2="239" y2="479.5" stroke="#f0f0f0"/><line x1="219" y1="489.5" x2="239" y2="489.5" stroke="#f0f0f0"/><line x1="219" y1="499.5" x2="239" y2="499.5" stroke="#f0f0f0"/><line x1="219" y1="509.5" x2="239" y2="509.5" stroke="#f0f0f0"/><line x1="219" y1="519.5" x2="239" y2="519.5" stroke="#f0f0f0"/><line x1="219" y1="529.5" x2="239" y2="529.5" stroke="#f0f0f0"/><line x1="219" y1="539.5" x2="239" y2="539.5" stroke="#f0f0f0"/><line x1="219" y1="549.5" x2="239" y2="549.5" stroke="#f0f0f0"/><line x1="219" y1="559.5" x2="239" y2="559.5" stroke="#f0f0f0"/><line x1="219" y1="569.5" x2="239" y2="569.5" stroke="#f0f0f0"/><line x1="219" y1="579.5" x2="239" y2="579.5" stroke="#f0f0f0"/><line x1="219" y1="589.5" x2="239" y2="589.5" stroke="#f0f0f0"/><line x1="219" y1="599.5" x2="239" y2="599.5" stroke="#f0f0f0"/><line x1="219" y1="609.5" x2="239" y2="609.5" stroke="#f0f0f0"/><line x1="219" y1="619.5" x2="239" y2="619.5" stroke="#f0f0f0"/><line x1="219" y1="629.5" x2="239" y2="629.5" stroke="#f0f0f0"/><line x1="219" y1="639.5" x2="239" y2="639.5" stroke="#f0f0f0"/><line x1="219" y1="649.5" x2="239" y2="649.5" stroke="#f0f0f0"/><line x1="219" y1="659.5" x2="239" y2="659.5" stroke="#f0f0f0"/><line x1="219" y1="669.5" x2="239" y2="669.5" stroke="#f0f0f0"/><line x1="219" y1="679.5" x2="239" y2="679.5" stroke="#f0f0f0"/><rect x="239.5" y="100" width="753.5" height="587" fill="#e3e7ee"/><line x1="238.3" y1="100" x2="238.3" y2="658.5" stroke="#f4ac60" stroke-width="1.6"/><line x1="238.3" y1="102" x2="238.3" y2="658.5" stroke="#9a6a40" stroke-width="1.6" stroke-dasharray="1 3"/><line x1="238.3" y1="658.5" x2="238.3" y2="686" stroke="#111" stroke-width="1.3"/><path d="M235 676 L238.3 686 L241.6 676" stroke="#111" stroke-width="1.3" fill="none"/><text x="313" y="147" font-family="Liberation Sans" font-size="9" letter-spacing="0.55" fill="#800080" stroke="#800080" stroke-width="0.3">Infeeding conveyor</text><rect x="304" y="326.5" width="321" height="226.5" fill="none" stroke="#707070" stroke-width="1.5" stroke-dasharray="1.5 4.3"/><text x="540" y="345" font-family="Liberation Sans" font-size="9" letter-spacing="0.55" fill="#1a1a1a" stroke="#1a1a1a" stroke-width="0.3">Pallet conveyor</text><path d="M996 477.5 H936.5 V543.5 H996" fill="none" stroke="#f01818" stroke-width="2" stroke-dasharray="2 3.7"/><text x="947" y="497" font-family="Liberation Sans" font-size="9" letter-spacing="0.3" fill="#f02020" stroke="#f02020" stroke-width="0.3">Order picking</text><text x="947" y="510" font-family="Liberation Sans" font-size="9" letter-spacing="0.3" fill="#f02020" stroke="#f02020" stroke-width="0.3">lines</text><path d="M332.3 316 V241 Q332.3 223 350 223 H855 Q874 223 879 200 L893.5 137.8 H974 L985.5 149 Q991.5 156 991.5 165 V326" fill="none" stroke="#9c9c9c" stroke-width="9"/><path d="M332.3 316 V241 Q332.3 223 350 223 H855 Q874 223 879 200 L893.5 137.8 H974 L985.5 149 Q991.5 156 991.5 165 V326" fill="none" stroke="#7c7c7c" stroke-width="9" stroke-dasharray="1.1 1"/><path d="M493 532 V290 Q493 270 513 270 H675 Q688 270 697 261 L738 222.5" fill="none" stroke="#9c9c9c" stroke-width="9"/><path d="M493 532 V290 Q493 270 513 270 H675 Q688 270 697 261 L738 222.5" fill="none" stroke="#7c7c7c" stroke-width="9" stroke-dasharray="1.1 1"/><path d="M493 530 Q493 553 516 553 H592 Q615.5 553 615.5 530 V411.5" fill="none" stroke="#9c9c9c" stroke-width="9"/><path d="M493 530 Q493 553 516 553 H592 Q615.5 553 615.5 530 V411.5" fill="none" stroke="#7c7c7c" stroke-width="9" stroke-dasharray="1.1 1"/><path d="M710 553.4 H996" fill="none" stroke="#9c9c9c" stroke-width="9"/><path d="M710 553.4 H996" fill="none" stroke="#7c7c7c" stroke-width="9" stroke-dasharray="1.1 1"/><path d="M946.5 553.4 V580 Q946.5 600.4 967 600.4 H996" fill="none" stroke="#9c9c9c" stroke-width="9"/><path d="M946.5 553.4 V580 Q946.5 600.4 967 600.4 H996" fill="none" stroke="#7c7c7c" stroke-width="9" stroke-dasharray="1.1 1"/><path d="M332 364.5 H521" fill="none" stroke="#cfcfcf" stroke-width="8.5"/><path d="M332 364.5 H521" fill="none" stroke="#c0c0c0" stroke-width="8.5" stroke-dasharray="1 1"/><path d="M332 364.5 V544" fill="none" stroke="#cfcfcf" stroke-width="9"/><path d="M332 364.5 V544" fill="none" stroke="#c0c0c0" stroke-width="9" stroke-dasharray="1 1"/><path d="M398 364.5 V544" fill="none" stroke="#cfcfcf" stroke-width="9"/><path d="M398 364.5 V544" fill="none" stroke="#c0c0c0" stroke-width="9" stroke-dasharray="1 1"/><path d="M455.5 364.5 V544" fill="none" stroke="#cfcfcf" stroke-width="9"/><path d="M455.5 364.5 V544" fill="none" stroke="#c0c0c0" stroke-width="9" stroke-dasharray="1 1"/><path d="M521 364.5 V544" fill="none" stroke="#cfcfcf" stroke-width="9"/><path d="M521 364.5 V544" fill="none" stroke="#c0c0c0" stroke-width="9" stroke-dasharray="1 1"/><path d="M521 411.4 H606" fill="none" stroke="#cfcfcf" stroke-width="9"/><path d="M521 411.4 H606" fill="none" stroke="#c0c0c0" stroke-width="9" stroke-dasharray="1 1"/><path d="M521 449.6 H606" fill="none" stroke="#cfcfcf" stroke-width="9"/><path d="M521 449.6 H606" fill="none" stroke="#c0c0c0" stroke-width="9" stroke-dasharray="1 1"/><path d="M304 317 V128 H995" fill="none" stroke="#800080" stroke-width="2" stroke-dasharray="2 3.7"/><path d="M304 317 H995" fill="none" stroke="#800080" stroke-width="2" stroke-dasharray="2 3.7"/><path d="M328 360 H346 V369 Q337 369 337 378 H328 Z" fill="#8a8a8a"/><path d="M384 360 H412 V369 Q402 369 402 378 H393.5 Q393.5 369 384 369 Z" fill="#8a8a8a"/><path d="M441 360 H470 V369 Q460 369 460 378 H451 Q451 369 441 369 Z" fill="#8a8a8a"/><path d="M507 360 H526 V378 H516.5 Q516.5 369 507 369 Z" fill="#8a8a8a"/><rect x="516.5" y="405" width="10" height="13.5" fill="#8a8a8a"/><rect x="516.5" y="443" width="10" height="13.5" fill="#8a8a8a"/><path d="M520.5 405v13M520.5 443v13" stroke="#222" stroke-width="1" stroke-dasharray="1.5 1.5"/><path d="M521 411.4h4M521 449.6h4" stroke="#222" stroke-width="1"/><circle cx="332.2" cy="364.4" r="6.9" fill="#8a8a8a" stroke="#1a1a1a" stroke-width="1.3"/><path d="M329.59999999999997 364.7 H334.8 M332.4 364.7 V367.7" stroke="#111" stroke-width="1.2"/><path d="M343.7 364.4 h1.8 M338.59999999999997 364.4 h1.4 M332.2 375.9 v1.8 M332.2 370.9 v1.8 " stroke="#111" stroke-width="1.4"/><circle cx="398.1" cy="364.4" r="6.9" fill="#8a8a8a" stroke="#1a1a1a" stroke-width="1.3"/><path d="M395.5 364.7 H400.70000000000005 M398.3 364.7 V367.7" stroke="#111" stroke-width="1.2"/><path d="M385.1 364.4 h1.8 M390.3 364.4 h1.4 M409.6 364.4 h1.8 M404.5 364.4 h1.4 M398.1 375.9 v1.8 M398.1 370.9 v1.8 " stroke="#111" stroke-width="1.4"/><circle cx="454.7" cy="364.4" r="6.9" fill="#8a8a8a" stroke="#1a1a1a" stroke-width="1.3"/><path d="M452.09999999999997 364.7 H457.3 M454.9 364.7 V367.7" stroke="#111" stroke-width="1.2"/><path d="M441.7 364.4 h1.8 M446.9 364.4 h1.4 M466.2 364.4 h1.8 M461.09999999999997 364.4 h1.4 M454.7 375.9 v1.8 M454.7 370.9 v1.8 " stroke="#111" stroke-width="1.4"/><circle cx="521.2" cy="364.4" r="6.9" fill="#8a8a8a" stroke="#1a1a1a" stroke-width="1.3"/><path d="M518.6 364.7 H523.8000000000001 M521.4000000000001 364.7 V367.7" stroke="#111" stroke-width="1.2"/><path d="M508.20000000000005 364.4 h1.8 M513.4000000000001 364.4 h1.4 M521.2 375.9 v1.8 M521.2 370.9 v1.8 " stroke="#111" stroke-width="1.4"/><circle cx="737.9" cy="222.4" r="6.9" fill="#8a8a8a" stroke="#1a1a1a" stroke-width="1.3"/><path d="M735.3 222.70000000000002 H740.5 M738.1 222.70000000000002 V225.70000000000002" stroke="#111" stroke-width="1.2"/><path d="M724.9 222.4 h1.8 M730.1 222.4 h1.4 M749.4 222.4 h1.8 M744.3 222.4 h1.4 " stroke="#111" stroke-width="1.4"/><circle cx="893.5" cy="137.8" r="6.9" fill="#8a8a8a" stroke="#1a1a1a" stroke-width="1.3"/><path d="M890.9 138.10000000000002 H896.1 M893.7 138.10000000000002 V141.10000000000002" stroke="#111" stroke-width="1.2"/><path d="M905.0 137.8 h1.8 M899.9 137.8 h1.4 M893.5 149.3 v1.8 M893.5 144.3 v1.8 " stroke="#111" stroke-width="1.4"/><circle cx="974.3" cy="137.8" r="6.9" fill="#8a8a8a" stroke="#1a1a1a" stroke-width="1.3"/><path d="M971.6999999999999 138.10000000000002 H976.9 M974.5 138.10000000000002 V141.10000000000002" stroke="#111" stroke-width="1.2"/><path d="M961.3 137.8 h1.8 M966.5 137.8 h1.4 M985.8 137.8 h1.8 M980.6999999999999 137.8 h1.4 " stroke="#111" stroke-width="1.4"/><circle cx="596.3" cy="553" r="4.3" fill="#8a8a8a" stroke="#1a1a1a" stroke-width="1.2"/><rect x="804.5" y="546" width="10" height="15.5" rx="1.5" fill="#7a7a7a" stroke="#1a1a1a" stroke-width="1.2"/><rect x="889.5" y="546" width="10" height="15.5" rx="1.5" fill="#7a7a7a" stroke="#1a1a1a" stroke-width="1.2"/><path d="M943.5 552.5 h6 M946.5 552.5 v3" stroke="#111" stroke-width="1.1"/><path d="M-3 -3 L2 0 L-3 3" transform="translate(538,222.8) rotate(0)" fill="none" stroke="#fff" stroke-width="1.8"/><path d="M-3 -3 L2 0 L-3 3" transform="translate(590,270) rotate(0)" fill="none" stroke="#fff" stroke-width="1.8"/><path d="M-3 -3 L2 0 L-3 3" transform="translate(332.3,268) rotate(-90)" fill="none" stroke="#fff" stroke-width="1.8"/><path d="M-3 -3 L2 0 L-3 3" transform="translate(932,137.8) rotate(0)" fill="none" stroke="#fff" stroke-width="1.8"/><path d="M-3 -3 L2 0 L-3 3" transform="translate(885.3,178.5) rotate(-77)" fill="none" stroke="#fff" stroke-width="1.8"/><path d="M-3 -3 L2 0 L-3 3" transform="translate(991,238) rotate(90)" fill="none" stroke="#fff" stroke-width="1.8"/><path d="M-3 -3 L2 0 L-3 3" transform="translate(688,265) rotate(-30)" fill="none" stroke="#fff" stroke-width="1.8"/><path d="M-3 -3 L2 0 L-3 3" transform="translate(398,459) rotate(90)" fill="none" stroke="#fff" stroke-width="1.8"/><path d="M-3 -3 L2 0 L-3 3" transform="translate(455.5,459) rotate(90)" fill="none" stroke="#fff" stroke-width="1.8"/><path d="M-3 -3 L2 0 L-3 3" transform="translate(332,464) rotate(-90)" fill="none" stroke="#fff" stroke-width="1.8"/><path d="M-3 -3 L2 0 L-3 3" transform="translate(493,413) rotate(-90)" fill="none" stroke="#fff" stroke-width="1.8"/><path d="M-3 -3 L2 0 L-3 3" transform="translate(521,503) rotate(-90)" fill="none" stroke="#fff" stroke-width="1.8"/><path d="M-3 -3 L2 0 L-3 3" transform="translate(563,411.4) rotate(0)" fill="none" stroke="#fff" stroke-width="1.8"/><path d="M-3 -3 L2 0 L-3 3" transform="translate(563,449.6) rotate(0)" fill="none" stroke="#fff" stroke-width="1.8"/><path d="M-3 -3 L2 0 L-3 3" transform="translate(615.5,470) rotate(90)" fill="none" stroke="#fff" stroke-width="1.8"/><path d="M-3 -3 L2 0 L-3 3" transform="translate(557,553) rotate(180)" fill="none" stroke="#fff" stroke-width="1.8"/><path d="M-3 -3 L2 0 L-3 3" transform="translate(824,553.4) rotate(0)" fill="none" stroke="#fff" stroke-width="1.8"/><path d="M-3 -3 L2 0 L-3 3" transform="translate(986,553.4) rotate(0)" fill="none" stroke="#fff" stroke-width="1.8"/><path d="M320.5 418 H344.5 M320.5 415 V421 M344.5 415 V421" stroke="#333" stroke-width="1.3"/><circle cx="332" cy="418" r="2.5" fill="#8a8a8a" stroke="#222"/><path d="M442 544.3 H467.5 M442 541 V547.5 M467.5 541 V547.5" stroke="#333" stroke-width="1.3"/><circle cx="455" cy="544.3" r="2.5" fill="#8a8a8a" stroke="#222"/><path d="M719.2 210.5 V235.2 M716 210.5 H722.5 M716 235.2 H722.5" stroke="#333" stroke-width="1.3"/><circle cx="719.2" cy="222.5" r="2.3" fill="#8a8a8a" stroke="#222"/><path d="M719.2 222.5 L737 242 M734.5 244 L739.5 240" stroke="#333" stroke-width="1.1"/><circle cx="728.7" cy="232.3" r="2.2" fill="#8a8a8a" stroke="#222"/><path d="M333 412 L358 395.5" stroke="#f0a868" stroke-width="1.1"/><rect x="359" y="394" width="14.5" height="4.5" fill="#8a3010"/><path d="M361 396h11" stroke="#c06040" stroke-width="0.8" stroke-dasharray="1 1"/><path d="M247.1 553.4 H294.1 V647.2 H247.1 Z" fill="none" stroke="#1a82ff" stroke-width="2" stroke-dasharray="7.4 3.7"/><path d="M567.7 364 H606.5 V393.3 H567.7 Z" fill="none" stroke="#1a82ff" stroke-width="2" stroke-dasharray="7.4 3.7"/><path d="M567.7 468 H606.5 V497.4 H567.7 Z" fill="none" stroke="#1a82ff" stroke-width="2" stroke-dasharray="7.4 3.7"/><path d="M303.6 656.9 H360.7 V685.4 H303.6 Z" fill="none" stroke="#1a82ff" stroke-width="2" stroke-dasharray="7.4 3.7"/><path d="M426.4 656.9 H483.5 V685.4 H426.4 Z" fill="none" stroke="#1a82ff" stroke-width="2" stroke-dasharray="7.4 3.7"/><path d="M492.3 656.9 H550.1 V685.4 H492.3 Z" fill="none" stroke="#1a82ff" stroke-width="2" stroke-dasharray="7.4 3.7"/><path d="M294.1 600.3 H313.5" fill="none" stroke="#1a82ff" stroke-width="2" stroke-dasharray="7.4 3.7"/><path d="M351.5 600.3 H436.5" fill="none" stroke="#1a82ff" stroke-width="2" stroke-dasharray="7.4 3.7"/><path d="M474.5 600.3 H502.5" fill="none" stroke="#1a82ff" stroke-width="2" stroke-dasharray="7.4 3.7"/><path d="M332.2 553 V581" stroke="#1a82ff" stroke-width="2" stroke-dasharray="5 3" fill="none"/><path d="M332.2 620 V647" stroke="#4a9cf4" stroke-width="1.3" stroke-dasharray="4 2.5" fill="none"/><circle cx="332.2" cy="553.2" r="7.3" fill="none" stroke="#4a9cf4" stroke-width="1.4" stroke-dasharray="5 3"/><circle cx="332.2" cy="553.2" r="1.6" fill="#1a82ff"/><circle cx="332.2" cy="647.3" r="7.3" fill="none" stroke="#4a9cf4" stroke-width="1.4" stroke-dasharray="5 3"/><circle cx="332.2" cy="647.3" r="1.3" fill="#1a82ff"/><circle cx="332.2" cy="600.6" r="19.1" fill="none" stroke="#4a9cf4" stroke-width="1.3"/><path d="M332.2 581.5 V619.7" stroke="#4a9cf4" stroke-width="1"/><g transform="translate(332.2,667)"><circle r="3" fill="none" stroke="#222" stroke-width="1.1"/><circle r="0.8" fill="#222"/><path d="M-7 0 H-3 M3 0 H7 M0 -7 V-3 M0 3 V16 M-4 12 L0 16.5 L4 12" stroke="#222" stroke-width="1.1" fill="none"/></g><path d="M455.4 553 V581" stroke="#1a82ff" stroke-width="2" stroke-dasharray="5 3" fill="none"/><path d="M455.4 620 V647" stroke="#4a9cf4" stroke-width="1.3" stroke-dasharray="4 2.5" fill="none"/><circle cx="455.4" cy="553.2" r="7.3" fill="none" stroke="#4a9cf4" stroke-width="1.4" stroke-dasharray="5 3"/><circle cx="455.4" cy="553.2" r="1.6" fill="#1a82ff"/><circle cx="455.4" cy="647.3" r="7.3" fill="none" stroke="#4a9cf4" stroke-width="1.4" stroke-dasharray="5 3"/><circle cx="455.4" cy="647.3" r="1.3" fill="#1a82ff"/><circle cx="455.4" cy="600.6" r="19.1" fill="none" stroke="#4a9cf4" stroke-width="1.3"/><path d="M455.4 581.5 V619.7" stroke="#4a9cf4" stroke-width="1"/><g transform="translate(455.4,667)"><circle r="3" fill="none" stroke="#222" stroke-width="1.1"/><circle r="0.8" fill="#222"/><path d="M-7 0 H-3 M3 0 H7 M0 -7 V-3 M0 3 V16 M-4 12 L0 16.5 L4 12" stroke="#222" stroke-width="1.1" fill="none"/></g><path d="M521.3 553 V581" stroke="#1a82ff" stroke-width="2" stroke-dasharray="5 3" fill="none"/><path d="M521.3 620 V647" stroke="#4a9cf4" stroke-width="1.3" stroke-dasharray="4 2.5" fill="none"/><circle cx="521.3" cy="553.2" r="7.3" fill="none" stroke="#4a9cf4" stroke-width="1.4" stroke-dasharray="5 3"/><circle cx="521.3" cy="553.2" r="1.6" fill="#1a82ff"/><circle cx="521.3" cy="647.3" r="7.3" fill="none" stroke="#4a9cf4" stroke-width="1.4" stroke-dasharray="5 3"/><circle cx="521.3" cy="647.3" r="1.3" fill="#1a82ff"/><circle cx="521.3" cy="600.6" r="19.1" fill="none" stroke="#4a9cf4" stroke-width="1.3"/><path d="M521.3 581.5 V619.7" stroke="#4a9cf4" stroke-width="1"/><g transform="translate(521.3,667)"><circle r="3" fill="none" stroke="#222" stroke-width="1.1"/><circle r="0.8" fill="#222"/><path d="M-7 0 H-3 M3 0 H7 M0 -7 V-3 M0 3 V16 M-4 12 L0 16.5 L4 12" stroke="#222" stroke-width="1.1" fill="none"/></g><path d="M332.2 581.5 Q332.2 600.6 313.09999999999997 600.6 Q332.2 600.6 332.2 619.7 Q332.2 600.6 351.3 600.6 Q332.2 600.6 332.2 581.5 M313.09999999999997 600.6 H351.3" fill="none" stroke="#4a9cf4" stroke-width="1.1"/><path d="M455.4 581.5 Q455.4 600.6 436.29999999999995 600.6 Q455.4 600.6 455.4 619.7 Q455.4 600.6 474.5 600.6 Q455.4 600.6 455.4 581.5 M436.29999999999995 600.6 H474.5" fill="none" stroke="#4a9cf4" stroke-width="1.1"/><path d="M521.3 581.5 Q521.3 600.6 502.19999999999993 600.6 Q521.3 600.6 521.3 619.7" fill="none" stroke="#4a9cf4" stroke-width="1.1"/><g transform="translate(266.4,582)"><circle r="3" fill="none" stroke="#222" stroke-width="1.1"/><circle r="0.8" fill="#222"/><path d="M-7 0 H-3 M0 -7 V-3 M0 3 V7 M3 0 H16.5 M12.5 -4 L17 0 L12.5 4" stroke="#222" stroke-width="1.1" fill="none"/></g><g transform="translate(266.4,629)"><circle r="3" fill="none" stroke="#222" stroke-width="1.1"/><circle r="0.8" fill="#222"/><path d="M-7 0 H-3 M0 -7 V-3 M0 3 V7 M3 0 H16.5 M12.5 -4 L17 0 L12.5 4" stroke="#222" stroke-width="1.1" fill="none"/></g><path d="M332.3 318 V410" stroke="#1a82ff" stroke-width="2" stroke-dasharray="6 3" fill="none"/><circle cx="332.3" cy="316.5" r="7.3" fill="none" stroke="#4a9cf4" stroke-width="1.4" stroke-dasharray="5 3"/><circle cx="332.3" cy="412" r="7.3" fill="none" stroke="#4a9cf4" stroke-width="1.4" stroke-dasharray="5 3"/><circle cx="597" cy="430.8" r="7.3" fill="none" stroke="#4a9cf4" stroke-width="1.4" stroke-dasharray="5 3"/><circle cx="597" cy="430.8" r="1.6" fill="#1a82ff"/><path d="M597 430.8 L614 440 M605 421 L614 412" stroke="#1a82ff" stroke-width="1.8"/><path d="M984 477 V336.5 H993" fill="none" stroke="#8a8a8a" stroke-width="1.2" stroke-dasharray="4 2"/><path d="M992.3 336 V480" fill="none" stroke="#1a82ff" stroke-width="1.6" stroke-dasharray="5 3"/><circle cx="993" cy="336" r="7" fill="none" stroke="#4a9cf4" stroke-width="1.3" stroke-dasharray="5 3"/><circle cx="993" cy="478" r="7" fill="none" stroke="#4a9cf4" stroke-width="1.3" stroke-dasharray="5 3"/><text x="870.7" y="317.3" font-family="Liberation Sans" font-size="9" letter-spacing="0.55" fill="#1a1a1a" stroke="#1a1a1a" stroke-width="0.3">foodRack</text><path d="M870.7 327.1 H936.5 L984 345.7" fill="none" stroke="#333" stroke-width="1.2"/><text x="870.7" y="355.1" font-family="Liberation Sans" font-size="9" letter-spacing="0.55" fill="#1a1a1a" stroke="#1a1a1a" stroke-width="0.3">beverageRack</text><path d="M870.7 364.90000000000003 H936.5 L996 388.105" fill="none" stroke="#333" stroke-width="1.2"/><text x="870.7" y="392.9" font-family="Liberation Sans" font-size="9" letter-spacing="0.55" fill="#1a1a1a" stroke="#1a1a1a" stroke-width="0.3">dishRack</text><path d="M870.7 402.70000000000005 H936.5 L996 425.90500000000003" fill="none" stroke="#333" stroke-width="1.2"/><text x="738.7" y="591" font-family="Liberation Sans" font-size="9" letter-spacing="0.55" fill="#1a1a1a" stroke="#1a1a1a" stroke-width="0.3">Labeling</text><path d="M729 600.7 H786 L805 572" fill="none" stroke="#333" stroke-width="1.2"/><text x="814.2" y="591" font-family="Liberation Sans" font-size="9" letter-spacing="0.55" fill="#1a1a1a" stroke="#1a1a1a" stroke-width="0.3">Invoice put</text><path d="M814 600.7 H871 L890 572" fill="none" stroke="#333" stroke-width="1.2"/><g transform="translate(699,356) rotate(-45)"><rect x="-12" y="-4.2" width="24" height="8.4" rx="1" fill="#505050" stroke="#ffffff" stroke-width="0.8" stroke-opacity="0.7"/><path d="M-9 -1 L-5 -1 M3 1.5 L9 -1.5 M6 2.5 L9 1" stroke="#b0b0b0" stroke-width="0.9"/><path d="M1 1 V6.5" stroke="#111" stroke-width="2.4"/><circle cx="1" cy="7.5" r="2.2" fill="#c8b090"/></g><g transform="translate(823.5,353) rotate(45)"><rect x="-12" y="-4.2" width="24" height="8.4" rx="1" fill="#505050" stroke="#ffffff" stroke-width="0.8" stroke-opacity="0.7"/><path d="M-9 -1 L-5 -1 M3 1.5 L9 -1.5 M6 2.5 L9 1" stroke="#b0b0b0" stroke-width="0.9"/><path d="M1 1 V6.5" stroke="#111" stroke-width="2.4"/><circle cx="1" cy="7.5" r="2.2" fill="#c8b090"/></g><g transform="translate(862,488) rotate(129)"><rect x="-12" y="-4.2" width="24" height="8.4" rx="1" fill="#505050" stroke="#ffffff" stroke-width="0.8" stroke-opacity="0.7"/><path d="M-9 -1 L-5 -1 M3 1.5 L9 -1.5 M6 2.5 L9 1" stroke="#b0b0b0" stroke-width="0.9"/><path d="M1 1 V6.5" stroke="#111" stroke-width="2.4"/><circle cx="1" cy="7.5" r="2.2" fill="#c8b090"/></g><text x="963" y="681" font-family="Liberation Sans" font-size="11" fill="#222">层</text><rect x="978.5" y="672.5" width="6" height="6" fill="#fff" stroke="#111" stroke-width="1.2"/><path d="M985 675 V680.5 H980" fill="none" stroke="#111" stroke-width="1.2"/></svg>

<!-- RIGHT PANEL -->
<div class="a" style="left:1016px;top:76px;width:263px;height:630px;background:#f0f0f0;border:1px solid #a0a0a0;border-radius:4px 0 0 0"></div>
<div class="a" style="left:1017px;top:76px;width:69px;height:23px;background:linear-gradient(#fff,#f2f2f2);border-top:2px solid #555;border-right:1px solid #9a9a9a;border-radius:3px 3px 0 0"></div>
<div class="a" style="left:1086px;top:97px;width:193px;height:1px;background:#a8a8a8"></div>
<svg class="a" style="left:1021px;top:80px" width="14" height="14" viewBox="0 0 14 14"><rect x="0.5" y="0.5" width="13" height="13" fill="#f4f6fa" stroke="#6a80a8"/><rect x="0.5" y="0.5" width="13" height="3" fill="#a8b8d8" stroke="#6a80a8"/><path d="M3.5 3.5 V13.5 M0.5 6.5 H13.5 M0.5 9.5 H13.5" stroke="#8a9ac0" stroke-width="0.8"/></svg>
<div class="t" style="left:1039px;top:81px;font-size:13px;color:#111">属性</div>
<svg class="a" style="left:1069px;top:82px" width="10" height="10"><path d="M0.5 0.5 L9.5 9.5 M9.5 0.5 L0.5 9.5" stroke="#333" stroke-width="1.1"/></svg>
<svg class="a" style="left:1191px;top:80px" width="16" height="15" viewBox="0 0 16 15"><rect x="0.5" y="3.5" width="13" height="11" fill="#fff" stroke="#a09070"/><rect x="0.5" y="3.5" width="13" height="3" fill="#c8dcf0" stroke="#a09070"/><path d="M8 9 L14 3 L15.5 1" stroke="#30a040" stroke-width="2.5"/></svg>
<svg class="a" style="left:1218px;top:80px" width="8" height="16" viewBox="0 0 8 16"><circle cx="4" cy="2.5" r="2" fill="none" stroke="#555"/><circle cx="4" cy="8" r="2" fill="none" stroke="#555"/><circle cx="4" cy="13.5" r="2" fill="none" stroke="#555"/></svg>
<div class="a" style="left:1239px;top:81px;width:10px;height:4px;border:1px solid #111;border-radius:1px"></div>
<div class="a" style="left:1260px;top:81px;width:10px;height:10px;border:1px solid #111;border-top-width:2px;border-radius:1px"></div>
<div class="a" style="left:1018px;top:98px;width:261px;height:594px;background:#fff"></div>
<div class="a" style="left:1019px;top:98px;width:260px;height:29px;background:linear-gradient(#ffffff,#e8eef8);border-bottom:2px solid #d8e4f0"></div>
<svg class="a" style="left:1023px;top:105px" width="15" height="15" viewBox="0 0 15 15"><rect x="0.75" y="0.75" width="13.5" height="13.5" fill="#fff" stroke="#1f9ad8" stroke-width="1.5"/><path d="M2.3 10.2 L6.8 3.2 L7.6 12 L12.3 9.6" stroke="#1f9ad8" stroke-width="1.4" fill="none" stroke-linejoin="round"/><path d="M3 9.6 L10 10.4" stroke="#1f9ad8" stroke-width="0.9"/></svg>
<div class="t" style="left:1043px;top:105px;font-size:15.3px;line-height:18px;color:#1a78d0">Warehouse conveyor - 模型</div>
<div class="t" style="left:1039px;top:139px;font-size:12px;color:#222">名称：</div>
<div class="a" style="left:1128px;top:137px;width:140px;height:20px;background:#fff;border:1px solid #c8c8c8;border-bottom:1px solid #8a8a8a;border-radius:2px"></div>
<div class="t" style="left:1131px;top:140px;font-size:12px;color:#111">Warehouse conveyor</div>
<div class="t" style="left:1039px;top:168px;font-size:12px;color:#222">模型时间单位：</div>
<div class="a" style="left:1127px;top:166px;width:77px;height:19px;background:#fff;border:1px solid #9a9a9a;border-radius:1px"></div>
<div class="t" style="left:1130px;top:169px;font-size:12px;color:#222">秒</div>
<div class="a" style="left:1186px;top:168px;width:16px;height:15px;background:#e8e8e8"></div><div class="a" style="left:1189px;top:172px;width:0;height:0;border-left:5px solid transparent;border-right:5px solid transparent;border-top:7px solid #555"></div>
<div class="a" style="left:1019px;top:194px;width:242px;height:18px;background:linear-gradient(#eef3fa,#ffffff);border-top:1px solid #c8d8ec;border-left:1px solid #dde6f2"></div>
<div class="a" style="left:1028px;top:199px;width:0;height:0;border-top:4px solid transparent;border-bottom:4px solid transparent;border-left:4px solid #1a6ab8"></div>
<div class="t" style="left:1039px;top:196px;font-size:12px;color:#1a6ab8;-webkit-text-stroke:0.3px #1a6ab8">依赖项</div>
<div class="a" style="left:1019px;top:214px;width:242px;height:18px;background:linear-gradient(#eef3fa,#ffffff);border-top:1px solid #c8d8ec;border-left:1px solid #dde6f2"></div>
<div class="a" style="left:1028px;top:219px;width:0;height:0;border-top:4px solid transparent;border-bottom:4px solid transparent;border-left:4px solid #1a6ab8"></div>
<div class="t" style="left:1039px;top:216px;font-size:12px;color:#1a6ab8;-webkit-text-stroke:0.3px #1a6ab8">数值方法</div>
<div class="a" style="left:1019px;top:234px;width:242px;height:18px;background:linear-gradient(#eef3fa,#ffffff);border-top:1px solid #c8d8ec;border-left:1px solid #dde6f2"></div>
<div class="a" style="left:1028px;top:239px;width:0;height:0;border-top:4px solid transparent;border-bottom:4px solid transparent;border-left:4px solid #1a6ab8"></div>
<div class="t" style="left:1039px;top:236px;font-size:12px;color:#1a6ab8;-webkit-text-stroke:0.3px #1a6ab8">高级</div>
<div class="a" style="left:1019px;top:254px;width:242px;height:18px;background:linear-gradient(#eef3fa,#ffffff);border-top:1px solid #c8d8ec;border-left:1px solid #dde6f2"></div>
<div class="a" style="left:1028px;top:259px;width:0;height:0;border-top:4px solid transparent;border-bottom:4px solid transparent;border-left:4px solid #1a6ab8"></div>
<div class="t" style="left:1039px;top:256px;font-size:12px;color:#1a6ab8;-webkit-text-stroke:0.3px #1a6ab8">描述</div>
<div class="a" style="left:1262px;top:127px;width:17px;height:565px;background:#f0f0f0"></div>
<div class="a" style="left:1266px;top:131px;width:0;height:0;border-left:5px solid transparent;border-right:5px solid transparent;border-bottom:6px solid #a0a0a0"></div>
<div class="a" style="left:1266px;top:677px;width:0;height:0;border-left:5px solid transparent;border-right:5px solid transparent;border-top:6px solid #a0a0a0"></div>
<div class="a" style="left:1018px;top:688px;width:261px;height:17px;background:#f0f0f0"></div>
<div class="a" style="left:1035px;top:695px;width:141px;height:2px;background:#6e6e6e"></div>

<!-- STATUS -->
<div class="t" style="left:-1px;top:709.5px;font-size:12px;color:#111;letter-spacing:-0.15px">Warehouse conveyor</div>
<div class="a" style="left:337px;top:708px;width:1px;height:20px;background:#c8c8c8"></div>
<svg class="a" style="left:346px;top:709px" width="14" height="14" viewBox="0 0 14 14"><rect x="0.5" y="0.5" width="13" height="9" fill="#2a70c0" stroke="#1a4a90"/><rect x="2" y="2" width="10" height="6" fill="#8ac0f0"/><path d="M4 12.5 H10 M7 10 V12.5" stroke="#1a4a90" stroke-width="1.3"/></svg>
<svg class="a" style="left:367px;top:709px" width="13" height="15" viewBox="0 0 13 15"><rect x="0.5" y="0.5" width="12" height="14" fill="#f4f0e8" stroke="#a09080"/><circle cx="5" cy="5" r="2.6" fill="#e03030"/><path d="M3 13 L6 9 L9 13 Z" fill="#f0a020"/></svg>
<div class="a" style="left:396px;top:708px;width:1px;height:20px;background:#c8c8c8"></div>
<svg class="a" style="left:404px;top:709px" width="14" height="15" viewBox="0 0 14 15"><path d="M1 1 L4 5 M13 1 L10 5 M2 13 L5 10" stroke="#a8a8a8" stroke-width="1.2"/><circle cx="7" cy="7" r="3.5" fill="none" stroke="#a8a8a8" stroke-width="1.2"/></svg>
<svg class="a" style="left:426px;top:709px" width="14" height="15" viewBox="0 0 14 15"><circle cx="5" cy="5" r="4" fill="#b8b8b8"/><path d="M3 14 L8 6 L13 14 Z" fill="#a8a8a8"/><rect x="1" y="9" width="5" height="5" fill="#c0c0c0"/></svg>
<svg class="a" style="left:447px;top:709px" width="14" height="15" viewBox="0 0 14 15"><path d="M1 8 C3 2 9 2 12 8" stroke="#a8a8a8" stroke-width="1.3" fill="none"/><path d="M10 6 L12.5 9 L13.5 5" stroke="#a8a8a8" stroke-width="1.2" fill="none"/><circle cx="6" cy="3" r="1" fill="#a8a8a8"/></svg>
<svg class="a" style="left:468px;top:709px" width="14" height="15" viewBox="0 0 14 15"><path d="M4 1 V14 M1 11 L4 14 L7 11 M4 5 H13 M10 2 L13 5 L10 8" stroke="#a8a8a8" stroke-width="1.2" fill="none"/></svg>
<svg class="a" style="left:490px;top:709px" width="14" height="15" viewBox="0 0 14 15"><path d="M7 1 V7 L2 13 M7 7 L13 12" stroke="#a8a8a8" stroke-width="1.2" fill="none"/><circle cx="7" cy="9" r="3" fill="#b8b8b8"/></svg>
<div class="a" style="left:513px;top:708px;width:1px;height:20px;background:#c8c8c8"></div>
<div class="t" style="left:521px;top:710px;font-size:12px;color:#111">时间： 秒</div>
<div class="a" style="left:691px;top:708px;width:1px;height:20px;background:#c8c8c8"></div>
<div class="t" style="left:698px;top:710px;font-size:12px;color:#111;letter-spacing:-0.2px">1米 = 10像素, X=777，Y=691</div>
<div class="a" style="left:1013px;top:712px;width:2px;height:12px;background:repeating-linear-gradient(#b9a58a 0 2px,transparent 2px 4px)"></div>
</body></html>
